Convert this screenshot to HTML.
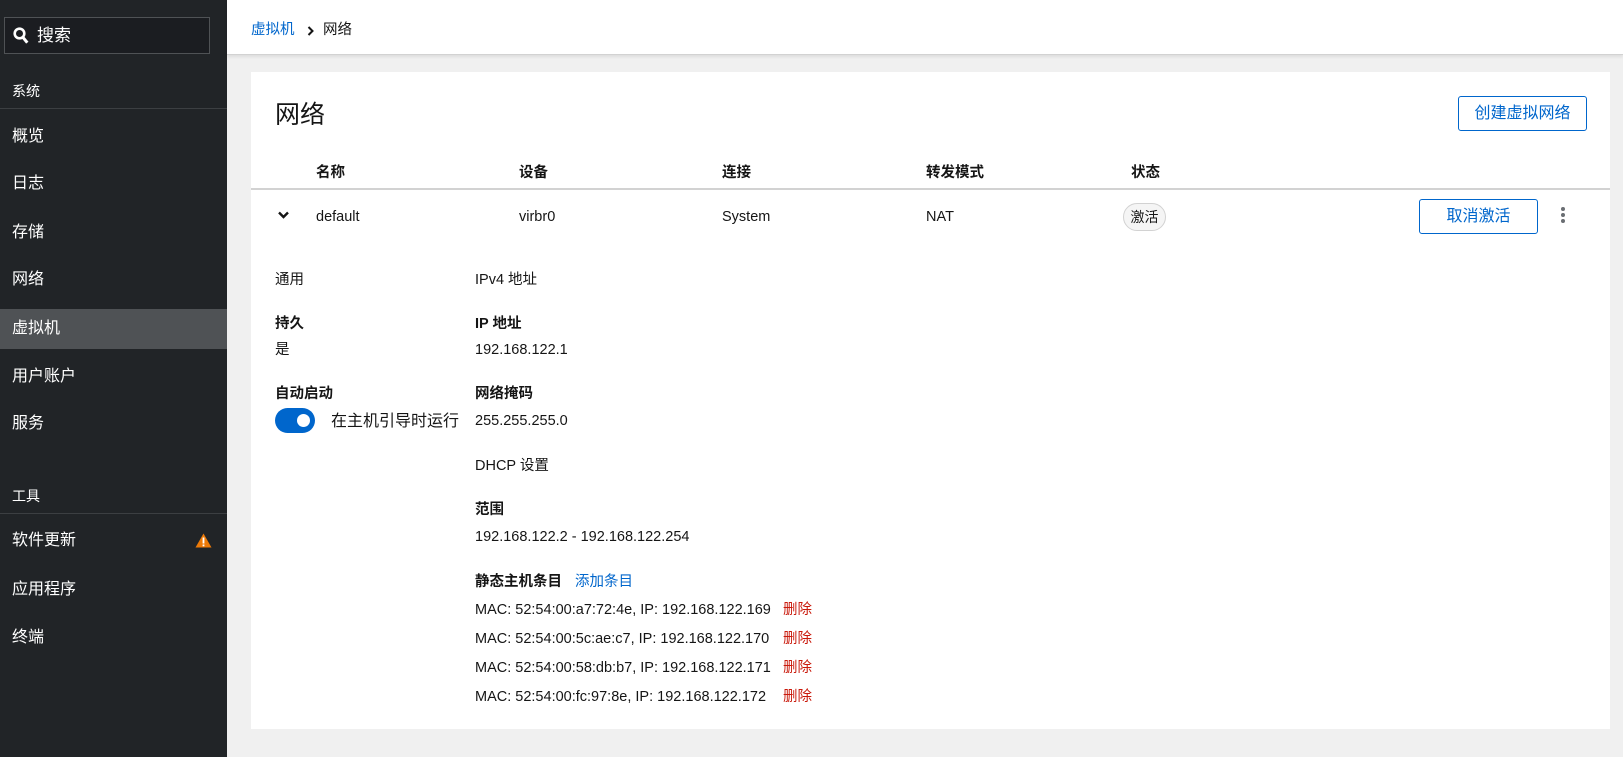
<!DOCTYPE html>
<html><head><meta charset="utf-8"><style>
*{box-sizing:border-box;margin:0;padding:0}
body{width:1623px;height:757px;overflow:hidden;background:#f0f0f0;font-family:"Liberation Sans","Noto Sans CJK SC",sans-serif;color:#151515;position:relative;font-size:14.5px}
.side{position:absolute;left:0;top:0;width:227px;height:757px;background:#212427;color:#fff}
.search{position:absolute;left:4px;top:17px;width:206px;height:37px;border:1px solid #4f5255;background:#1b1d21;font-size:17px;line-height:35px;padding-left:32px}
.search svg{position:absolute;left:8px;top:9px}
.sec{position:absolute;left:12px;font-size:14px}
.hr{position:absolute;left:0;width:227px;height:1px;background:#3c3f42}
.it{position:absolute;left:12px;font-size:16px;line-height:20px}
.hl{position:absolute;left:0;top:309px;width:227px;height:40px;background:#4f5255}
.top{position:absolute;left:227px;top:0;right:0;height:55px;background:#fff;border-bottom:1px solid #d2d2d2;box-shadow:0 2px 3px rgba(0,0,0,.08)}
.card{position:absolute;left:251px;top:72px;width:1359px;height:657px;background:#fff}
.a{position:absolute;white-space:nowrap;line-height:20px}
.b{font-weight:bold}
.blue{color:#0066cc}
.btn{position:absolute;border:1px solid #0066cc;border-radius:3px;color:#0066cc;text-align:center;font-size:16px}
.red{color:#c9190b}
</style></head><body>
<div class="side">
<div class="search"><svg width="16" height="18" viewBox="0 0 16 18"><circle cx="6.5" cy="6.5" r="4.8" fill="none" stroke="#fff" stroke-width="2.6"/><path d="M9.8 10.2l4.5 5.5" stroke="#fff" stroke-width="3"/></svg>搜索</div>
<div class="sec" style="top:81px">系统</div>
<div class="hr" style="top:108px"></div>
<div class="hl"></div>
<div class="it" style="top:127px">概览</div>
<div class="it" style="top:174px">日志</div>
<div class="it" style="top:223px">存储</div>
<div class="it" style="top:270px">网络</div>
<div class="it" style="top:319px">虚拟机</div>
<div class="it" style="top:367px">用户账户</div>
<div class="it" style="top:414px">服务</div>
<div class="sec" style="top:486px">工具</div>
<div class="hr" style="top:513px"></div>
<div class="it" style="top:531px">软件更新</div>
<svg style="position:absolute;left:195px;top:533px" width="17" height="15" viewBox="0 0 17 15"><path d="M8.5 0.5L16.5 14.5H0.5Z" fill="#ec7a08"/><rect x="7.6" y="4.5" width="1.8" height="6" fill="#fff"/><rect x="7.6" y="11.5" width="1.8" height="1.8" fill="#fff"/></svg>
<div class="it" style="top:580px">应用程序</div>
<div class="it" style="top:628px">终端</div>
</div>
<div class="top">
<div class="a blue" style="left:24px;top:20px">虚拟机</div>
<svg style="position:absolute;left:80px;top:26px" width="7" height="10" viewBox="0 0 7 10"><path d="M1.5 1l4 4-4 4" fill="none" stroke="#151515" stroke-width="2"/></svg>
<div class="a" style="left:96px;top:20px">网络</div>
</div>
<div class="card">
<div class="a" style="left:24px;top:28px;font-size:25px;line-height:30px">网络</div>
<div class="btn" style="left:1207px;top:24px;width:129px;height:35px;line-height:33px">创建虚拟网络</div>
<div class="a b" style="left:65px;top:91px">名称</div>
<div class="a b" style="left:268px;top:91px">设备</div>
<div class="a b" style="left:471px;top:91px">连接</div>
<div class="a b" style="left:675px;top:91px">转发模式</div>
<div class="a b" style="left:880px;top:91px">状态</div>
<div style="position:absolute;left:0;top:116px;width:1359px;height:2px;background:#d2d2d2"></div>
<svg style="position:absolute;left:27px;top:139px" width="11" height="8" viewBox="0 0 11 8"><path d="M1 1.5l4.5 4.5 4.5-4.5" fill="none" stroke="#151515" stroke-width="2.4"/></svg>
<div class="a" style="left:65px;top:135px">default</div>
<div class="a" style="left:268px;top:135px">virbr0</div>
<div class="a" style="left:471px;top:135px">System</div>
<div class="a" style="left:675px;top:135px">NAT</div>
<div class="a" style="left:872px;top:131px;width:43px;height:28px;border:1px solid #d2d2d2;border-radius:14px;background:#f5f5f5;text-align:center;line-height:26px;font-size:14px">激活</div>
<div class="btn" style="left:1168px;top:127px;width:119px;height:35px;line-height:33px">取消激活</div>
<svg style="position:absolute;left:1309px;top:134px" width="6" height="18"><circle cx="3" cy="3" r="2" fill="#6a6e73"/><circle cx="3" cy="9" r="2" fill="#6a6e73"/><circle cx="3" cy="15" r="2" fill="#6a6e73"/></svg>
<div class="a" style="left:24px;top:198px">通用</div>
<div class="a b" style="left:24px;top:242px">持久</div>
<div class="a" style="left:24px;top:268px">是</div>
<div class="a b" style="left:24px;top:312px">自动启动</div>
<div style="position:absolute;left:24px;top:336px;width:40px;height:25px;border-radius:13px;background:#0066cc"><div style="position:absolute;left:22px;top:6px;width:13px;height:13px;border-radius:50%;background:#fff"></div></div>
<div class="a" style="left:80px;top:340px;font-size:16px">在主机引导时运行</div>
<div class="a" style="left:224px;top:198px">IPv4 地址</div>
<div class="a b" style="left:224px;top:242px">IP 地址</div>
<div class="a" style="left:224px;top:268px">192.168.122.1</div>
<div class="a b" style="left:224px;top:312px">网络掩码</div>
<div class="a" style="left:224px;top:339px">255.255.255.0</div>
<div class="a" style="left:224px;top:384px">DHCP 设置</div>
<div class="a b" style="left:224px;top:428px">范围</div>
<div class="a" style="left:224px;top:455px">192.168.122.2 - 192.168.122.254</div>
<div class="a b" style="left:224px;top:500px">静态主机条目</div>
<div class="a blue" style="left:324px;top:500px">添加条目</div>
<div class="a" style="left:224px;top:528px">MAC: 52:54:00:a7:72:4e, IP: 192.168.122.169</div><div class="a red" style="left:532px;top:528px">删除</div>
<div class="a" style="left:224px;top:557px">MAC: 52:54:00:5c:ae:c7, IP: 192.168.122.170</div><div class="a red" style="left:532px;top:557px">删除</div>
<div class="a" style="left:224px;top:586px">MAC: 52:54:00:58:db:b7, IP: 192.168.122.171</div><div class="a red" style="left:532px;top:586px">删除</div>
<div class="a" style="left:224px;top:615px">MAC: 52:54:00:fc:97:8e, IP: 192.168.122.172</div><div class="a red" style="left:532px;top:615px">删除</div>
</div>
</body></html>
